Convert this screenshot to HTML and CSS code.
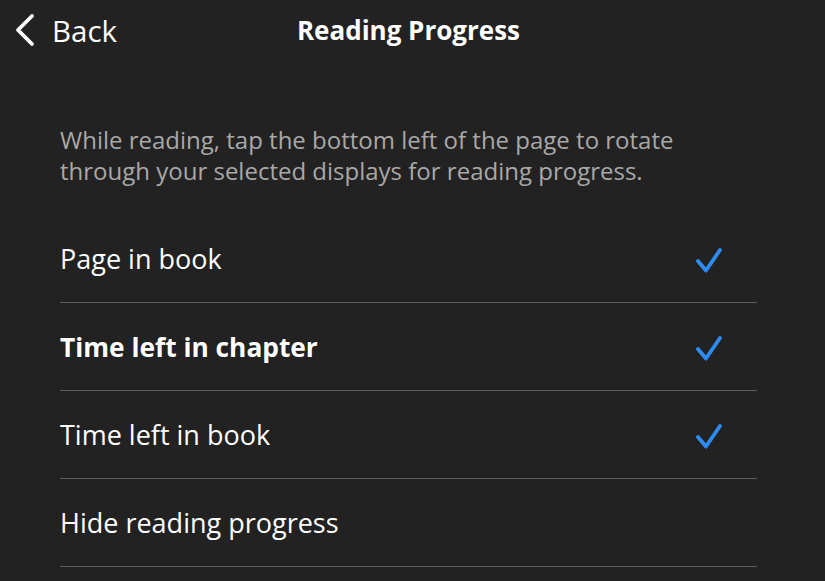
FILE: index.html
```html
<!DOCTYPE html>
<html>
<head>
<meta charset="utf-8">
<link rel="stylesheet" href="styles.css">
</head>
<body>
<div class="screen">
  <header class="topbar">
    <div class="back">
      <svg class="chev" width="24" height="34" viewBox="0 0 24 34"><path d="M19 3 L5 17 L19 31" fill="none" stroke="#fff" stroke-width="3.8" stroke-linecap="round" stroke-linejoin="round"/></svg>
      <span class="back-label">Back</span>
    </div>
    <h1 class="title">Reading Progress</h1>
  </header>
  <main class="content">
    <p class="desc">While reading, tap the bottom left of the page to rotate through your selected displays for reading progress.</p>
    <ul class="list">
      <li class="row"><span class="label">Page in book</span><svg class="check" width="28" height="28" viewBox="0 0 28 28"><path d="M3 16 L11 25.5 L25 5" fill="none" stroke="#2d8bf2" stroke-width="3.8" stroke-linecap="round" stroke-linejoin="round"/></svg></li>
      <li class="row"><span class="label bold">Time left in chapter</span><svg class="check" width="28" height="28" viewBox="0 0 28 28"><path d="M3 16 L11 25.5 L25 5" fill="none" stroke="#2d8bf2" stroke-width="3.8" stroke-linecap="round" stroke-linejoin="round"/></svg></li>
      <li class="row"><span class="label">Time left in book</span><svg class="check" width="28" height="28" viewBox="0 0 28 28"><path d="M3 16 L11 25.5 L25 5" fill="none" stroke="#2d8bf2" stroke-width="3.8" stroke-linecap="round" stroke-linejoin="round"/></svg></li>
      <li class="row"><span class="label">Hide reading progress</span></li>
    </ul>
  </main>
</div>
</body>
</html>
```
FILE: styles.css
```css
html, body {
  margin: 0;
  padding: 0;
  background: #222222;
}
.screen {
  width: 825px;
  height: 581px;
  overflow: hidden;
  background: #222222;
  font-family: "Open Sans", "Noto Sans", sans-serif;
  color: #ffffff;
}
.topbar {
  position: relative;
  height: 60px;
  display: flex;
  align-items: center;
}
.back {
  display: flex;
  align-items: center;
  padding-left: 13px;
  gap: 15px;
}
.chev { display: block; margin-top: -1px; }
.back-label {
  font-size: 29.5px;
  font-weight: 400;
  color: #ffffff;
}
.title {
  position: absolute;
  left: 0;
  right: 0;
  top: 0;
  height: 60px;
  margin: 0;
  display: flex;
  align-items: center;
  justify-content: center;
  font-size: 26px;
  font-weight: 700;
  padding-right: 8px;
}
.content {
  padding: 64px 68px 0 60px;
}
.desc {
  margin: 0 0 29px 0;
  max-width: 640px;
  font-size: 24px;
  line-height: 31px;
  color: #a8a8a8;
}
.list {
  list-style: none;
  margin: 0;
  padding: 0;
}
.row {
  height: 87px;
  border-bottom: 1px solid #5e5e5e;
  display: flex;
  align-items: center;
  justify-content: space-between;
}
.label {
  font-size: 27px;
  color: #ffffff;
}
.label.bold { font-weight: 700; font-size: 26.3px; }
.check { margin-right: 34px; margin-top: 0px; }
```
